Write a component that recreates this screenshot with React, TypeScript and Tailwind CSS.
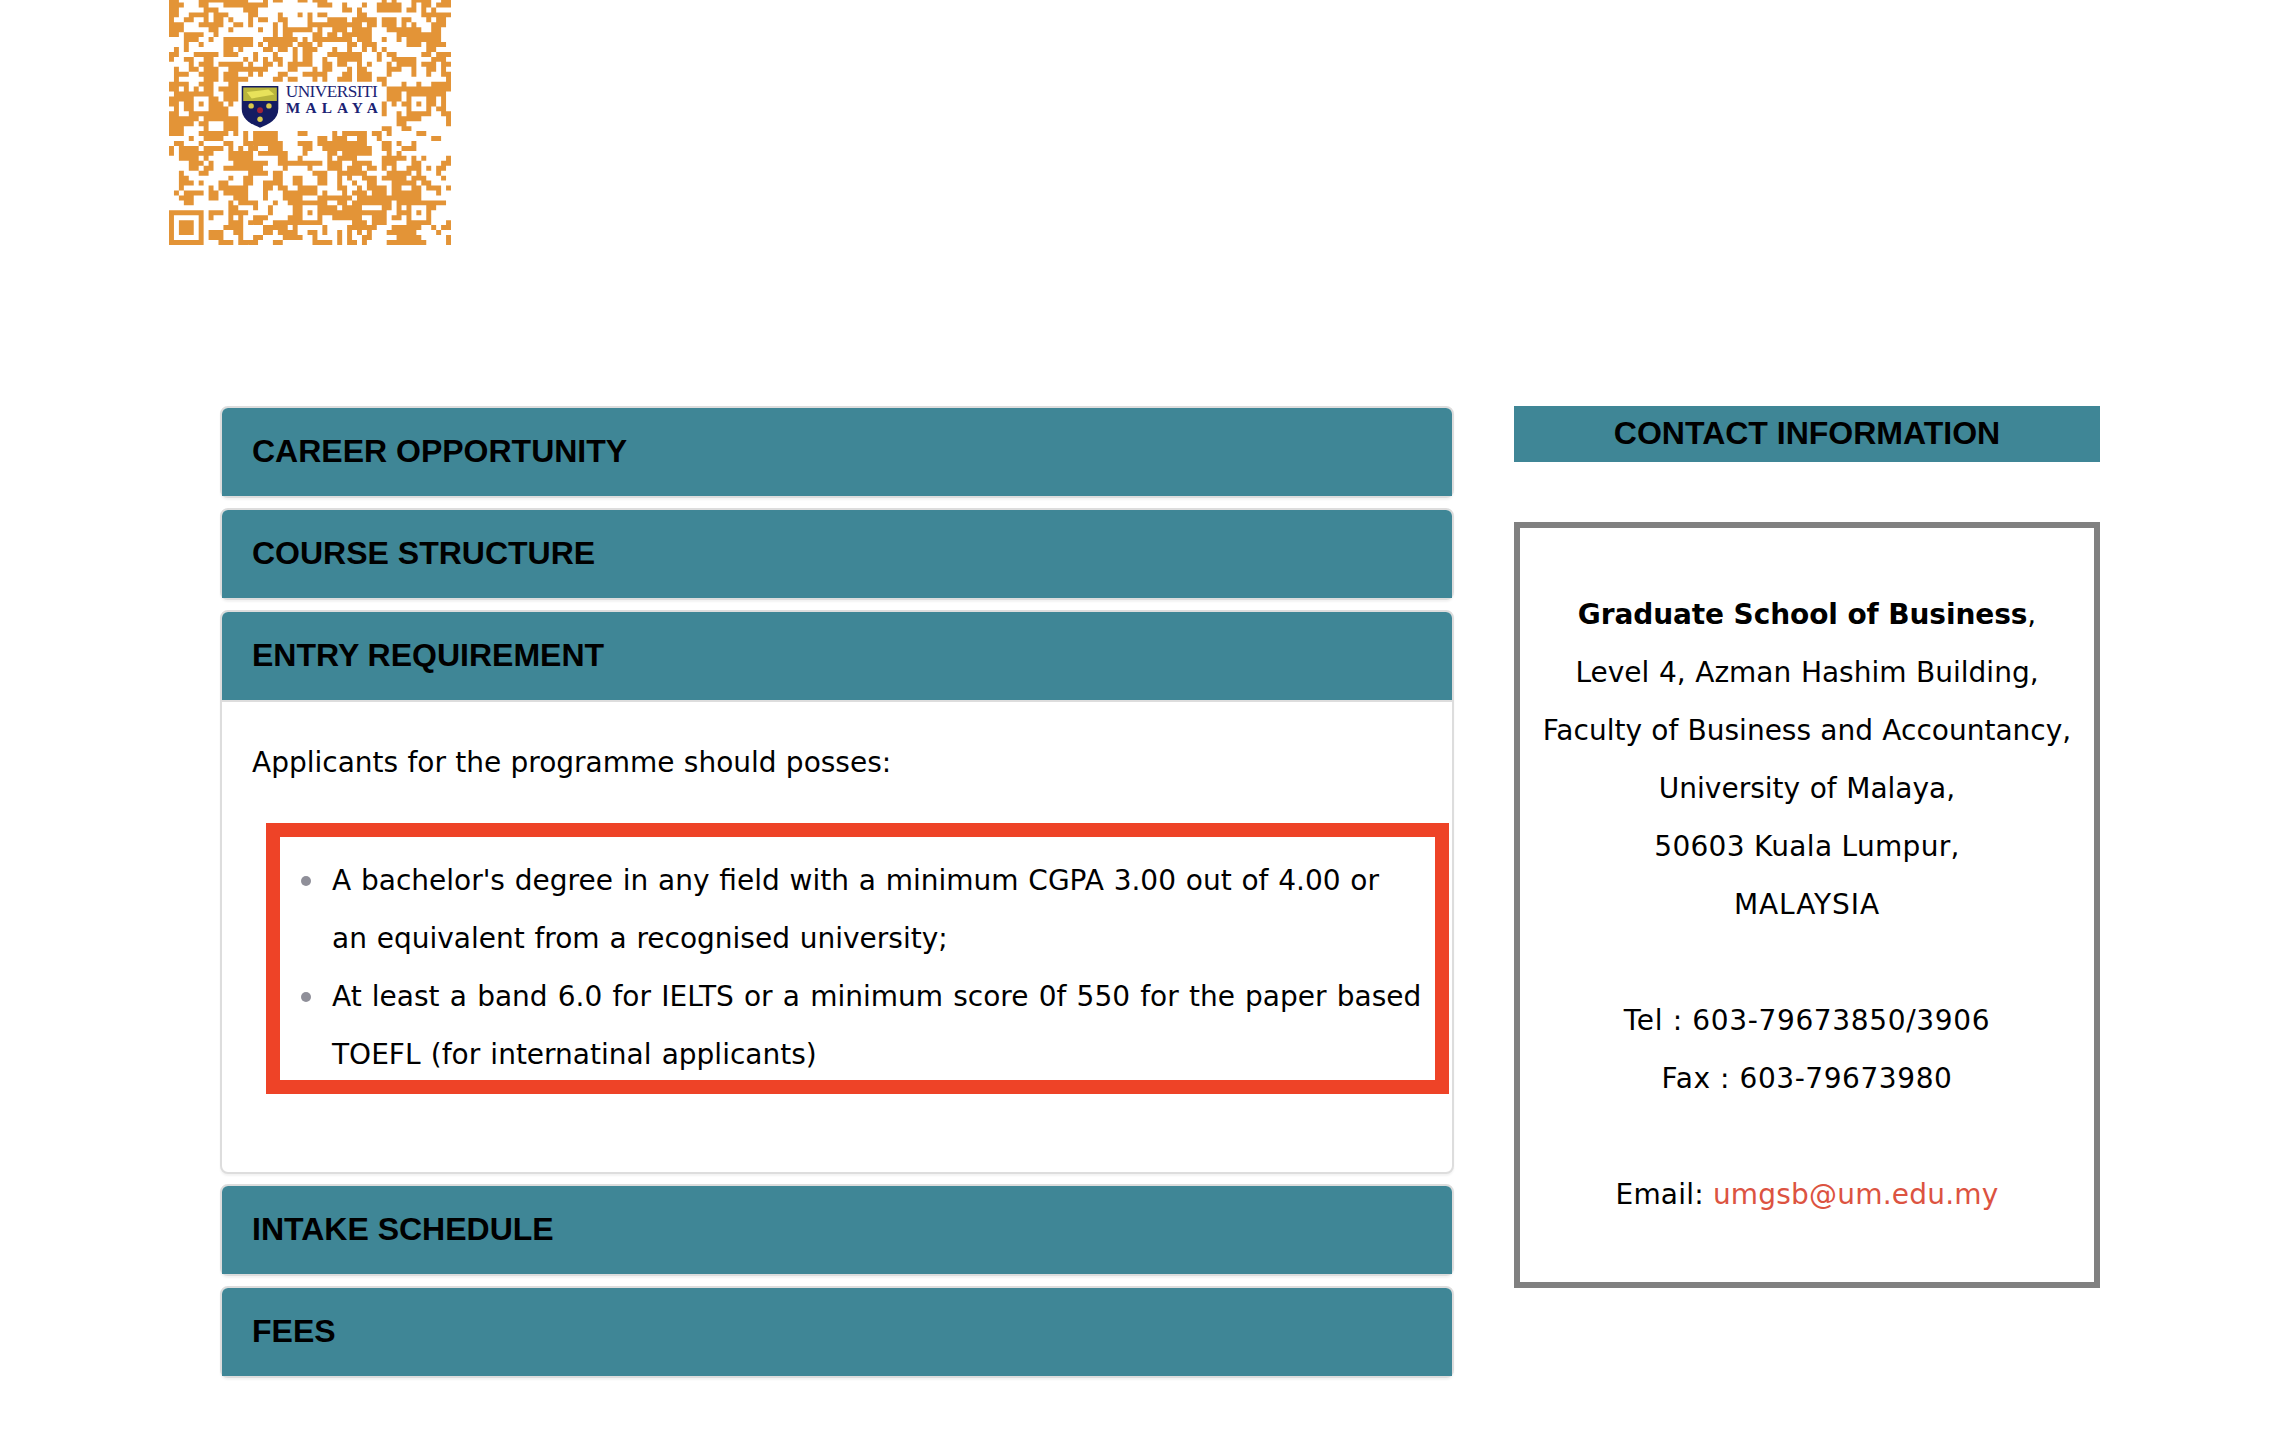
import React from 'react';

const TEAL = 'bg-[#3f8696]';

// draws the QR modules: fixed seed so it stays the same on each load
function buildModules() {
  const size = 57;
  let seed = 48271;
  const next = () => {
    seed = (seed * 16807) % 2147483647;
    return seed / 2147483647;
  };
  const grid: boolean[][] = [];
  for (let r = 0; r < size; r++) {
    const row: boolean[] = [];
    for (let c = 0; c < size; c++) {
      // neighbours get copied a bit so the blocks come out chunky
      const roll = next();
      if (c > 0 && roll < 0.22) row.push(row[c - 1]);
      else if (r > 0 && roll < 0.42) row.push(grid[r - 1][c]);
      else row.push(next() > 0.47);
    }
    grid.push(row);
  }
  const stamp = (r0: number, c0: number, n: number) => {
    for (let r = 0; r < n; r++) {
      for (let c = 0; c < n; c++) {
        grid[r0 + r][c0 + c] = Math.min(r, c, n - 1 - r, n - 1 - c) !== 1;
      }
    }
  };
  // finder bottom left + separator
  for (let r = 49; r < size; r++) for (let c = 0; c < 8; c++) grid[r][c] = false;
  stamp(50, 0, 7);
  // alignment squares
  [[28, 6], [28, 28], [28, 50], [50, 28], [50, 50]].forEach(([r, c]) => stamp(r - 2, c - 2, 5));
  // timing column
  for (let r = 8; r < 48; r++) if (r < 26 || r > 30) grid[r][6] = r % 2 === 0;
  // space for logo
  for (let r = 24; r < 34; r++) for (let c = 14; c < 43; c++) grid[r][c] = false;
  return grid;
}

function QrCode() {
  // one path for all modules, separate rects leave seams between them
  const d = buildModules()
    .map((row, r) => row.map((on, c) => (on ? `M${c} ${r}h1v1h-1z` : '')).join(''))
    .join('');
  return (
    <svg width="282" height="246" viewBox="0 7.5 57 49.72" className="block">
      <path d={d} fill="#e39437" />
      {/* UM crest */}
      <g transform="translate(14.7 24.9)">
        <path d="M0 0H7.4V4.6C7.4 6.8 5.5 7.7 3.7 8.4 1.9 7.7 0 6.8 0 4.6Z" fill="#141c62" />
        <path d="M0.3 .3H7.1V3H.3Z" fill="#b9b53c" />
        <path d="M1 1.2L5.4 .7 6.6 1.7 2 2.5Z" fill="#e8e25a" />
        <circle cx="1.9" cy="4" r=".55" fill="#d9c94c" />
        <circle cx="5.5" cy="4" r=".55" fill="#d9c94c" />
        <circle cx="3.7" cy="4.9" r=".6" fill="#a02438" />
        <circle cx="3.7" cy="6.7" r=".55" fill="#d9c94c" />
      </g>
      <text x="23.6" y="27.2" fontSize="3.5" fontFamily="'Liberation Serif', serif" fill="#1b2374" textLength="18.6">UNIVERSITI</text>
      <text x="23.6" y="30.4" fontSize="3.1" fontWeight="700" fontFamily="'Liberation Serif', serif" fill="#1b2374" textLength="18.6">MALAYA</text>
    </svg>
  );
}

function Panel({ title, children }: { title: string; children?: React.ReactNode }) {
  return (
    <div className="border-2 border-[#dddddd] rounded-lg shadow-[0_2px_2px_rgba(0,0,0,0.05)] bg-white">
      <div className={`${TEAL} h-[88px] pl-[30px] pt-[25px] rounded-t-md`}>
        <h4 className="text-[32px] leading-[36px] font-bold text-black font-['Liberation_Sans',sans-serif]">{title}</h4>
      </div>
      {children}
    </div>
  );
}

function Bullet({ className, children }: { className: string; children: React.ReactNode }) {
  return (
    <li className={`relative before:absolute before:left-[-31px] before:top-[24px] before:w-[10px] before:h-[10px] before:rounded-full before:bg-[#8f8f99] ${className}`}>
      {children}
    </li>
  );
}

export default function App() {
  return (
    <div className="min-h-[1452px] bg-white text-black font-['DejaVu_Sans',sans-serif] text-[28px] leading-[58px]">
      <div className="pl-[169px]">
        <QrCode />
      </div>

      <div className="mt-[160px] ml-[220px] flex items-start gap-[60px]">
        <div className="w-[1234px] flex flex-col gap-[10px]">
          <Panel title="CAREER OPPORTUNITY" />
          <Panel title="COURSE STRUCTURE" />
          <Panel title="ENTRY REQUIREMENT">
            <div className="relative border-t-2 border-[#dddddd] pt-[32px] px-[30px] pb-[88px]">
              <p className="[word-spacing:0.4px]">Applicants for the programme should posses:</p>
              <ul className="mt-[60px] pl-[80px]">
                <Bullet className="pr-[6px] [word-spacing:0.9px]">
                  A bachelor's degree in any field with a minimum CGPA 3.00 out of 4.00 or an equivalent from a recognised university;
                </Bullet>
                <Bullet className="-mr-[7px] [word-spacing:1.3px]">
                  At least a band 6.0 for IELTS or a minimum score 0f 550 for the paper based TOEFL (for internatinal applicants)
                </Bullet>
              </ul>
              {/* annotation drawn over the screenshot */}
              <div className="absolute left-[44px] top-[121px] w-[1183px] h-[271px] border-[14px] border-[#ee4327]" />
            </div>
          </Panel>
          <Panel title="INTAKE SCHEDULE" />
          <Panel title="FEES" />
        </div>

        <div className="w-[586px]">
          <div className={`${TEAL} h-[56px] text-center text-[32px] leading-[54px] font-bold font-['Liberation_Sans',sans-serif]`}>
            CONTACT INFORMATION
          </div>
          <div className="mt-[60px] border-[6px] border-[#808080] text-center py-[58px]">
            <p><b className="tracking-[-0.1px]">Graduate School of Business</b>,</p>
            <p className="[word-spacing:0.7px]">Level 4, Azman Hashim Building,</p>
            <p className="[word-spacing:0.4px]">Faculty of Business and Accountancy,</p>
            <p className="[word-spacing:0.7px]">University of Malaya,</p>
            <p className="tracking-[0.3px]">50603 Kuala Lumpur,</p>
            <p className="tracking-[0.9px]">MALAYSIA</p>
            <p className="mt-[58px] tracking-[0.65px]">Tel : 603-79673850/3906</p>
            <p className="tracking-[0.57px]">Fax : 603-79673980</p>
            <p className="mt-[58px] tracking-[0.2px]">Email: <a className="text-[#dc5341] tracking-[0.2px]">umgsb@um.edu.my</a></p>
          </div>
        </div>
      </div>
    </div>
  );
}
